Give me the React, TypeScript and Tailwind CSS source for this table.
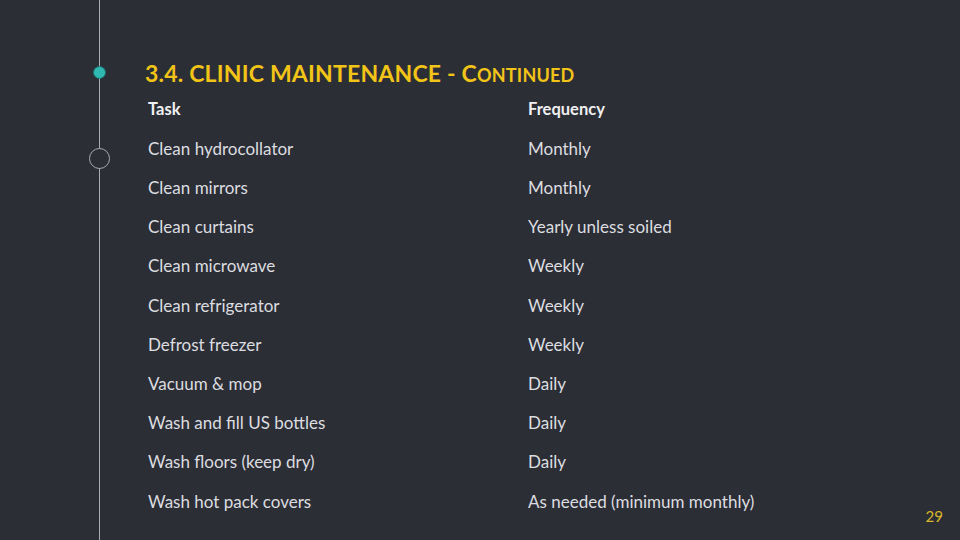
import React from "react";

const rows: [string, string][] = [
  ["Clean hydrocollator", "Monthly"],
  ["Clean mirrors", "Monthly"],
  ["Clean curtains", "Yearly unless soiled"],
  ["Clean microwave", "Weekly"],
  ["Clean refrigerator", "Weekly"],
  ["Defrost freezer", "Weekly"],
  ["Vacuum & mop", "Daily"],
  ["Wash and fill US bottles", "Daily"],
  ["Wash floors (keep dry)", "Daily"],
  ["Wash hot pack covers", "As needed (minimum monthly)"],
];

export default function App() {
  return (
    <div
      className="relative w-[960px] h-[540px] overflow-hidden bg-[#2c2e35] text-[#e6e6e8]"
      style={{ fontFamily: "Lato, 'Open Sans', sans-serif" }}
    >
      {/* timeline decoration */}
      <div className="absolute left-[99px] top-0 h-full w-px bg-[#a9acb2]" />
      <div className="absolute left-[93px] top-[66px] w-[13px] h-[13px] rounded-full bg-[#2fb8b2] border border-[#1e6f6c]" />
      <div className="absolute left-[89px] top-[148px] w-[21px] h-[21px] rounded-full bg-[#2c2e35] border border-[#a9acb2]" />

      <div className="flex flex-col pl-[145px] pt-[58px]">
        <h1 className="text-[23px] leading-[30px] font-bold text-[#f2c418] tracking-[0.2px]">
          3.4. CLINIC MAINTENANCE - C<span className="text-[18px]">ONTINUED</span>
        </h1>
        <div className="flex flex-col pl-[3px]">
          <div className="flex h-[39px] items-center text-[16.5px] font-bold text-[#f0f0f2]">
            <div className="w-[380px]">Task</div>
            <div>Frequency</div>
          </div>
          {rows.map(([task, freq]) => (
            <div key={task} className="flex h-[39.2px] items-center text-[17px] text-[#dcdde0]">
              <div className="w-[380px]">{task}</div>
              <div>{freq}</div>
            </div>
          ))}
        </div>
      </div>

      <div className="absolute right-[17px] bottom-[13px] text-[15px] text-[#d9b72a]">29</div>
    </div>
  );
}
